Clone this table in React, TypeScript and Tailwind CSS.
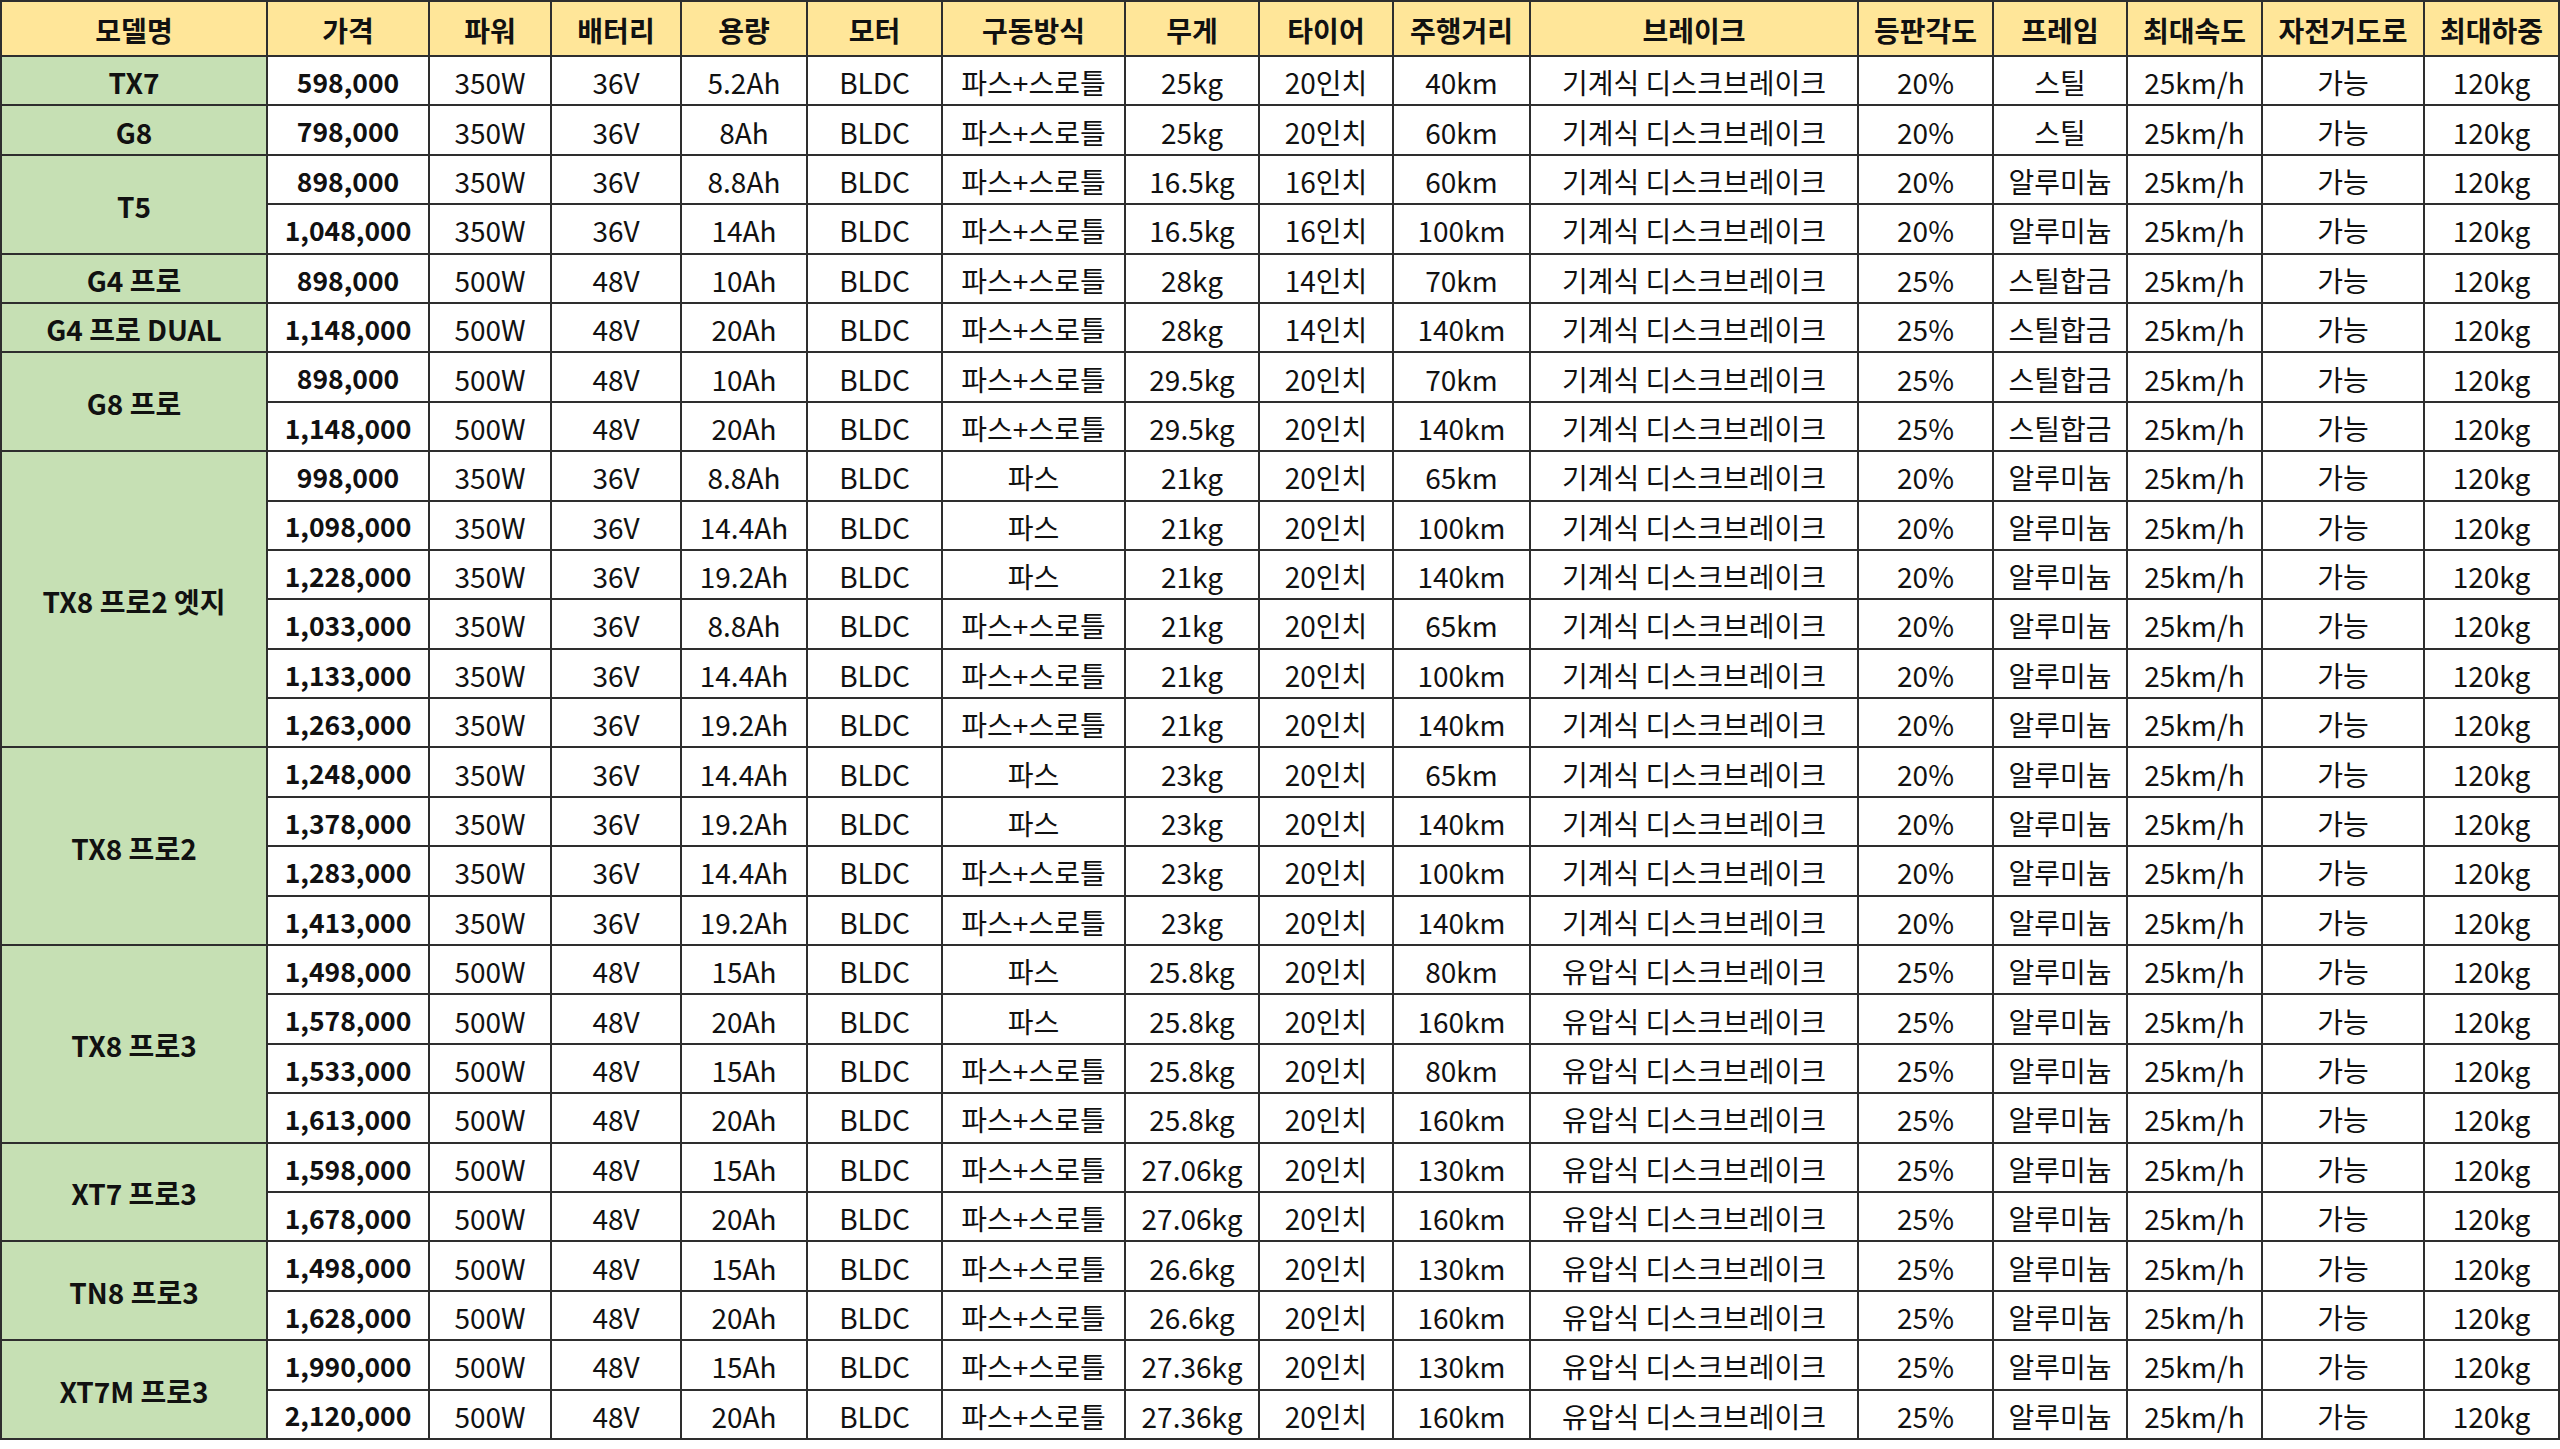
const headers = [
  "모델명",
  "가격",
  "파워",
  "배터리",
  "용량",
  "모터",
  "구동방식",
  "무게",
  "타이어",
  "주행거리",
  "브레이크",
  "등판각도",
  "프레임",
  "최대속도",
  "자전거도로",
  "최대하중",
];

const widths = [266, 162, 122, 130, 126, 135, 183, 134, 134, 137, 328, 135, 134, 135, 162, 135];

const MECH = "기계식 디스크브레이크";
const HYD = "유압식 디스크브레이크";
const PT = "파스+스로틀";

// price, power, volt, capacity, drive, weight, tire, range, brake, grade, frame
type Row = [string, string, string, string, string, string, string, string, string, string, string];

const groups: { name: string; rows: Row[] }[] = [
  { name: "TX7", rows: [["598,000", "350W", "36V", "5.2Ah", PT, "25kg", "20인치", "40km", MECH, "20%", "스틸"]] },
  { name: "G8", rows: [["798,000", "350W", "36V", "8Ah", PT, "25kg", "20인치", "60km", MECH, "20%", "스틸"]] },
  {
    name: "T5",
    rows: [
      ["898,000", "350W", "36V", "8.8Ah", PT, "16.5kg", "16인치", "60km", MECH, "20%", "알루미늄"],
      ["1,048,000", "350W", "36V", "14Ah", PT, "16.5kg", "16인치", "100km", MECH, "20%", "알루미늄"],
    ],
  },
  { name: "G4 프로", rows: [["898,000", "500W", "48V", "10Ah", PT, "28kg", "14인치", "70km", MECH, "25%", "스틸합금"]] },
  {
    name: "G4 프로 DUAL",
    rows: [["1,148,000", "500W", "48V", "20Ah", PT, "28kg", "14인치", "140km", MECH, "25%", "스틸합금"]],
  },
  {
    name: "G8 프로",
    rows: [
      ["898,000", "500W", "48V", "10Ah", PT, "29.5kg", "20인치", "70km", MECH, "25%", "스틸합금"],
      ["1,148,000", "500W", "48V", "20Ah", PT, "29.5kg", "20인치", "140km", MECH, "25%", "스틸합금"],
    ],
  },
  {
    name: "TX8 프로2 엣지",
    rows: [
      ["998,000", "350W", "36V", "8.8Ah", "파스", "21kg", "20인치", "65km", MECH, "20%", "알루미늄"],
      ["1,098,000", "350W", "36V", "14.4Ah", "파스", "21kg", "20인치", "100km", MECH, "20%", "알루미늄"],
      ["1,228,000", "350W", "36V", "19.2Ah", "파스", "21kg", "20인치", "140km", MECH, "20%", "알루미늄"],
      ["1,033,000", "350W", "36V", "8.8Ah", PT, "21kg", "20인치", "65km", MECH, "20%", "알루미늄"],
      ["1,133,000", "350W", "36V", "14.4Ah", PT, "21kg", "20인치", "100km", MECH, "20%", "알루미늄"],
      ["1,263,000", "350W", "36V", "19.2Ah", PT, "21kg", "20인치", "140km", MECH, "20%", "알루미늄"],
    ],
  },
  {
    name: "TX8 프로2",
    rows: [
      ["1,248,000", "350W", "36V", "14.4Ah", "파스", "23kg", "20인치", "65km", MECH, "20%", "알루미늄"],
      ["1,378,000", "350W", "36V", "19.2Ah", "파스", "23kg", "20인치", "140km", MECH, "20%", "알루미늄"],
      ["1,283,000", "350W", "36V", "14.4Ah", PT, "23kg", "20인치", "100km", MECH, "20%", "알루미늄"],
      ["1,413,000", "350W", "36V", "19.2Ah", PT, "23kg", "20인치", "140km", MECH, "20%", "알루미늄"],
    ],
  },
  {
    name: "TX8 프로3",
    rows: [
      ["1,498,000", "500W", "48V", "15Ah", "파스", "25.8kg", "20인치", "80km", HYD, "25%", "알루미늄"],
      ["1,578,000", "500W", "48V", "20Ah", "파스", "25.8kg", "20인치", "160km", HYD, "25%", "알루미늄"],
      ["1,533,000", "500W", "48V", "15Ah", PT, "25.8kg", "20인치", "80km", HYD, "25%", "알루미늄"],
      ["1,613,000", "500W", "48V", "20Ah", PT, "25.8kg", "20인치", "160km", HYD, "25%", "알루미늄"],
    ],
  },
  {
    name: "XT7 프로3",
    rows: [
      ["1,598,000", "500W", "48V", "15Ah", PT, "27.06kg", "20인치", "130km", HYD, "25%", "알루미늄"],
      ["1,678,000", "500W", "48V", "20Ah", PT, "27.06kg", "20인치", "160km", HYD, "25%", "알루미늄"],
    ],
  },
  {
    name: "TN8 프로3",
    rows: [
      ["1,498,000", "500W", "48V", "15Ah", PT, "26.6kg", "20인치", "130km", HYD, "25%", "알루미늄"],
      ["1,628,000", "500W", "48V", "20Ah", PT, "26.6kg", "20인치", "160km", HYD, "25%", "알루미늄"],
    ],
  },
  {
    name: "XT7M 프로3",
    rows: [
      ["1,990,000", "500W", "48V", "15Ah", PT, "27.36kg", "20인치", "130km", HYD, "25%", "알루미늄"],
      ["2,120,000", "500W", "48V", "20Ah", PT, "27.36kg", "20인치", "160km", HYD, "25%", "알루미늄"],
    ],
  },
];

const cell = "border-2 border-[#2e2e2e] text-center align-middle whitespace-nowrap p-0 pt-[3px]";

export default function App() {
  return (
    <div
      className="w-[2560px] h-[1449px] bg-white text-[#111] overflow-hidden"
      style={{ fontFamily: '"Noto Sans CJK KR", "Noto Sans", sans-serif' }}
    >
      <table className="table-fixed border-collapse w-[2558px] text-[28px] leading-none">
        <colgroup>
          {widths.map((w, i) => (
            <col key={i} style={{ width: w }} />
          ))}
        </colgroup>
        <thead>
          <tr className="h-[55px] bg-[#ffe699]">
            {headers.map((h) => (
              <th key={h} className={`${cell} font-bold`}>
                {h}
              </th>
            ))}
          </tr>
        </thead>
        <tbody>
          {groups.map((g) =>
            g.rows.map((r, i) => (
              <tr key={g.name + i} className="h-[49.4px]">
                {i === 0 && (
                  <td rowSpan={g.rows.length} className={`${cell} bg-[#c6e0b4] font-bold`}>
                    {g.name}
                  </td>
                )}
                <td className={`${cell} font-bold text-[26.5px]`}>{r[0]}</td>
                <td className={cell}>{r[1]}</td>
                <td className={cell}>{r[2]}</td>
                <td className={cell}>{r[3]}</td>
                <td className={cell}>BLDC</td>
                <td className={cell}>{r[4]}</td>
                <td className={cell}>{r[5]}</td>
                <td className={cell}>{r[6]}</td>
                <td className={cell}>{r[7]}</td>
                <td className={cell}>{r[8]}</td>
                <td className={cell}>{r[9]}</td>
                <td className={cell}>{r[10]}</td>
                <td className={cell}>25km/h</td>
                <td className={cell}>가능</td>
                <td className={cell}>120kg</td>
              </tr>
            ))
          )}
        </tbody>
      </table>
    </div>
  );
}
